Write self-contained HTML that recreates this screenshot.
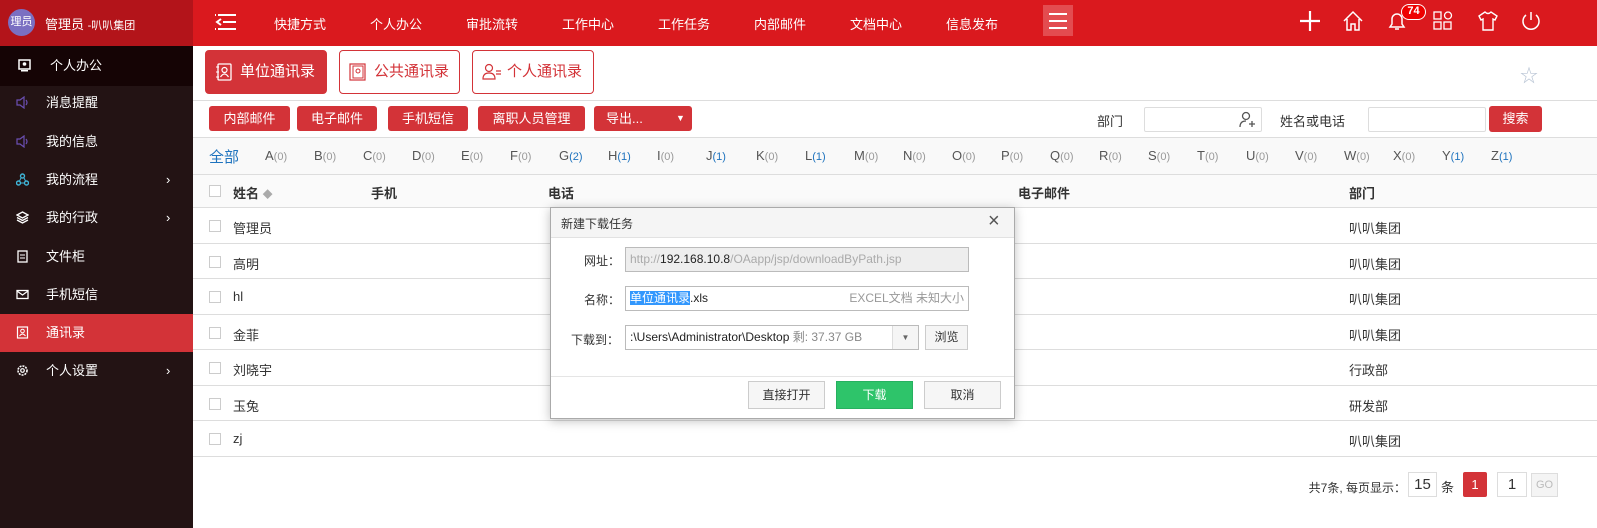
<!DOCTYPE html>
<html><head><meta charset="utf-8"><style>
*{margin:0;padding:0;box-sizing:border-box}
body{width:1597px;height:528px;overflow:hidden;background:#fff;font-family:"Liberation Sans","Noto Sans CJK SC",sans-serif;font-size:13px;color:#333;position:relative}
.a{position:absolute;white-space:nowrap}
#side{left:0;top:0;width:193px;height:528px;background:#231314}
#sh{left:0;top:0;width:193px;height:46px;background:#b3141a;color:#fff}
.mi{position:absolute;left:0;width:193px;height:38px;color:#fff;font-size:13px;line-height:38px;padding-left:46px}
.mi .ic{position:absolute;left:16px;top:12px;width:13px;height:13px}
.mi .ar{position:absolute;left:166px;top:0;font-size:13px}
#top{left:193px;top:0;width:1404px;height:46px;background:#da191e;color:#fff}
.nv{position:absolute;top:14px;font-size:13px;color:#fff}
.tab{position:absolute;top:50px;height:44px;border:1px solid #d33338;border-radius:4px;color:#d33338;font-size:15px;line-height:42px;padding-left:34px}
.btn{position:absolute;top:106px;height:25px;background:#d33338;color:#fff;border-radius:3px;font-size:13px;line-height:25px;text-align:center}
.lt{position:absolute;top:148px;font-size:13px;color:#555}
.lt i{font-style:normal;font-size:11px;color:#999}
.lt i.b{color:#1e73be}
.row{position:absolute;left:193px;width:1404px;height:35px;border-bottom:1px solid #ddd}
.cb{position:absolute;left:16px;top:12px;width:12px;height:12px;border:1px solid #ccc;background:#fff}
.row span{position:absolute;top:10px;font-size:13px;color:#333}
.th span{font-weight:bold}
</style></head><body>
<div id="side" class="a"></div>
<div id="sh" class="a">
 <div class="a" style="left:8px;top:9px;width:27px;height:27px;border-radius:50%;background:#7a6fc2;font-size:11px;line-height:27px;text-align:center;color:#fff">理员</div>
 <div class="a" style="left:45px;top:14px;font-size:13px">管理员 <span style="font-size:11px">-叭叭集团</span></div>
</div>
<div class="mi" style="top:46px;height:40px;line-height:40px;background:#150405;padding-left:50px">个人办公<svg class="ic" style="left:18px;top:13px" viewBox="0 0 13 13"><rect x="1" y="1" width="11" height="9" fill="none" stroke="#fff" stroke-width="1.5"/><circle cx="6.5" cy="5" r="1.8" fill="#fff"/><rect x="3" y="11" width="7" height="1.5" fill="#fff"/></svg></div>
<div class="mi" style="top:84px">消息提醒<svg class="ic" viewBox="0 0 13 13"><path d="M1 4h3l4-3v11l-4-3H1z M10 4q2 2.5 0 5" fill="none" stroke="#6b4fb3" stroke-width="1.2"/></svg></div>
<div class="mi" style="top:123px">我的信息<svg class="ic" viewBox="0 0 13 13"><path d="M1 4h3l4-3v11l-4-3H1z M10 4q2 2.5 0 5" fill="none" stroke="#6b4fb3" stroke-width="1.2"/></svg></div>
<div class="mi" style="top:161px">我的流程<span class="ar">&#8250;</span><svg class="ic" viewBox="0 0 13 13"><circle cx="6.5" cy="3" r="2" fill="none" stroke="#3fb5d8" stroke-width="1.4"/><circle cx="2.5" cy="10" r="2" fill="none" stroke="#3fb5d8" stroke-width="1.4"/><circle cx="10.5" cy="10" r="2" fill="none" stroke="#3fb5d8" stroke-width="1.4"/><path d="M5 5 3.5 8M8 5l1.5 3M4.5 10h4" stroke="#3fb5d8"/></svg></div>
<div class="mi" style="top:199px">我的行政<span class="ar">&#8250;</span><svg class="ic" viewBox="0 0 13 13"><path d="M6.5 1 12 4 6.5 7 1 4z M1 6.5l5.5 3 5.5-3 M1 9l5.5 3 5.5-3" fill="none" stroke="#fff" stroke-width="1.3"/></svg></div>
<div class="mi" style="top:238px">文件柜<svg class="ic" viewBox="0 0 13 13"><rect x="2" y="1" width="9" height="11" fill="none" stroke="#fff" stroke-width="1.3"/><path d="M4 5h5M4 8h5" stroke="#fff"/></svg></div>
<div class="mi" style="top:276px">手机短信<svg class="ic" viewBox="0 0 13 13"><rect x="1" y="2.5" width="11" height="8" fill="none" stroke="#fff" stroke-width="1.3"/><path d="M1 3l5.5 4 5.5-4" fill="none" stroke="#fff" stroke-width="1.2"/></svg></div>
<div class="mi" style="top:314px;background:#d33338">通讯录<svg class="ic" viewBox="0 0 13 13"><rect x="1.5" y="1" width="10" height="11" fill="none" stroke="#fff" stroke-width="1.2"/><circle cx="6.5" cy="5" r="1.8" fill="none" stroke="#fff"/><path d="M3.5 10q3-4 6 0" fill="none" stroke="#fff"/></svg></div>
<div class="mi" style="top:352px">个人设置<span class="ar">&#8250;</span><svg class="ic" viewBox="0 0 13 13"><circle cx="6.5" cy="6.5" r="4.5" fill="none" stroke="#fff" stroke-width="1.6" stroke-dasharray="2 1"/><circle cx="6.5" cy="6.5" r="1.8" fill="none" stroke="#fff" stroke-width="1.2"/></svg></div>

<div id="top" class="a">
 <svg class="a" style="left:21px;top:13px" width="24" height="18" viewBox="0 0 24 18"><path d="M4 2h18M9 9h13M4 16h18M1 2h1M1 16h1M7 6 3 9l4 3" stroke="#fff" stroke-width="2" fill="none"/></svg>
 <div class="nv" style="left:81px;">快捷方式</div>
 <div class="nv" style="left:177px">个人办公</div>
 <div class="nv" style="left:273px">审批流转</div>
 <div class="nv" style="left:369px">工作中心</div>
 <div class="nv" style="left:465px">工作任务</div>
 <div class="nv" style="left:561px">内部邮件</div>
 <div class="nv" style="left:657px">文档中心</div>
 <div class="nv" style="left:753px">信息发布</div>
 <div class="a" style="left:850px;top:5px;width:30px;height:31px;background:#e34c50"><svg width="30" height="31"><path d="M6 9h18M6 16h18M6 23h18" stroke="#fff" stroke-width="2"/></svg></div>
 <svg class="a" style="left:1106px;top:10px" width="22" height="22"><path d="M11 1v20M1 11h20" stroke="#fff" stroke-width="2.2"/></svg>
 <svg class="a" style="left:1149px;top:10px" width="22" height="22" viewBox="0 0 22 22"><path d="M2 11 11 2l9 9M5 9v11h4v-6h4v6h4V9" fill="none" stroke="#fff" stroke-width="1.5"/></svg>
 <svg class="a" style="left:1193px;top:10px" width="22" height="22" viewBox="0 0 22 22"><path d="M4 17h14l-2-3V9a5 5 0 0 0-10 0v5z M9 19h4" fill="none" stroke="#fff" stroke-width="1.5"/></svg>
 <div class="a" style="left:1208px;top:4px;width:25px;height:16px;border:1.5px solid #fff;border-radius:8px;background:#e00;font-size:11px;font-weight:bold;line-height:13px;text-align:center">74</div>
 <svg class="a" style="left:1240px;top:11px" width="20" height="20" viewBox="0 0 20 20"><rect x="1" y="1" width="7" height="7" fill="none" stroke="#fff" stroke-width="1.3"/><circle cx="15" cy="4.5" r="3.5" fill="none" stroke="#fff" stroke-width="1.3"/><rect x="1" y="11" width="7" height="7" fill="none" stroke="#fff" stroke-width="1.3"/><rect x="11" y="11" width="7" height="7" fill="none" stroke="#fff" stroke-width="1.3"/></svg>
 <svg class="a" style="left:1284px;top:10px" width="22" height="22" viewBox="0 0 22 22"><path d="M8 2 2 6l2 4 2-1v11h10V9l2 1 2-4-6-4q-3 3-6 0z" fill="none" stroke="#fff" stroke-width="1.4"/></svg>
 <svg class="a" style="left:1327px;top:10px" width="22" height="22" viewBox="0 0 22 22"><path d="M11 2v8M6 5a8 8 0 1 0 10 0" fill="none" stroke="#fff" stroke-width="1.5"/></svg>
</div>

<div class="tab" style="left:205px;width:122px;background:#d33338;color:#fff">单位通讯录<svg class="a" style="left:10px;top:12px" width="16" height="18" viewBox="0 0 16 18"><rect x="2" y="1" width="13" height="16" rx="1" fill="none" stroke="#fff" stroke-width="1.3"/><circle cx="8.5" cy="7" r="2.5" fill="none" stroke="#fff" stroke-width="1.2"/><path d="M4.5 14q4-6 8 0" fill="none" stroke="#fff" stroke-width="1.2"/><path d="M0 4h3M0 9h3M0 14h3" stroke="#fff"/></svg></div>
<div class="tab" style="left:339px;width:121px">公共通讯录<svg class="a" style="left:9px;top:12px" width="18" height="18" viewBox="0 0 18 18"><rect x="1" y="1" width="15" height="16" fill="none" stroke="#d33338" stroke-width="1.2"/><rect x="4" y="3" width="10" height="12" fill="none" stroke="#d33338"/><circle cx="9" cy="8" r="2" fill="none" stroke="#d33338"/></svg></div>
<div class="tab" style="left:472px;width:122px">个人通讯录<svg class="a" style="left:9px;top:12px" width="20" height="18" viewBox="0 0 20 18"><circle cx="7" cy="5" r="3.5" fill="none" stroke="#d33338" stroke-width="1.2"/><path d="M1 16q0-6 6-6t6 6z M14 8h5M14 11h5" fill="none" stroke="#d33338" stroke-width="1.2"/></svg></div>
<div class="a" style="left:1520px;top:62px;color:#b8c4d4;font-size:18px">☆</div>
<div class="a" style="left:193px;top:100px;width:1404px;height:1px;background:#ddd"></div>

<div class="btn" style="left:209px;width:81px">内部邮件</div>
<div class="btn" style="left:297px;width:80px">电子邮件</div>
<div class="btn" style="left:388px;width:80px">手机短信</div>
<div class="btn" style="left:478px;width:107px">离职人员管理</div>
<div class="btn" style="left:594px;width:98px;text-align:left;padding-left:12px">导出...<span class="a" style="left:82px;top:0;font-size:9px">▼</span></div>
<div class="a" style="left:1097px;top:111px">部门</div>
<div class="a" style="left:1144px;top:107px;width:118px;height:25px;border:1px solid #ddd;border-radius:2px"><svg class="a" style="left:93px;top:3px" width="18" height="18" viewBox="0 0 18 18"><circle cx="8" cy="5" r="3.5" fill="none" stroke="#555" stroke-width="1.3"/><path d="M2 16q0-6 6-6M11 13h6M14 10v6" fill="none" stroke="#555" stroke-width="1.3"/></svg></div>
<div class="a" style="left:1280px;top:111px">姓名或电话</div>
<div class="a" style="left:1368px;top:107px;width:118px;height:25px;border:1px solid #ddd;border-radius:2px"></div>
<div class="btn" style="left:1489px;width:53px;height:26px">搜索</div>

<div class="a" style="left:193px;top:137px;width:1404px;height:38px;background:#f9f9f9;border-top:1px solid #ddd;border-bottom:1px solid #ddd"></div>
<div class="lt" style="left:209px;top:146px;font-size:15px;color:#1e73be">全部</div>
<div class="lt" style="left:265px">A<i>(0)</i></div><div class="lt" style="left:314px">B<i>(0)</i></div><div class="lt" style="left:363px">C<i>(0)</i></div><div class="lt" style="left:412px">D<i>(0)</i></div><div class="lt" style="left:461px">E<i>(0)</i></div><div class="lt" style="left:510px">F<i>(0)</i></div><div class="lt" style="left:559px">G<i class="b">(2)</i></div><div class="lt" style="left:608px">H<i class="b">(1)</i></div><div class="lt" style="left:657px">I<i>(0)</i></div><div class="lt" style="left:706px">J<i class="b">(1)</i></div><div class="lt" style="left:756px">K<i>(0)</i></div><div class="lt" style="left:805px">L<i class="b">(1)</i></div><div class="lt" style="left:854px">M<i>(0)</i></div><div class="lt" style="left:903px">N<i>(0)</i></div><div class="lt" style="left:952px">O<i>(0)</i></div><div class="lt" style="left:1001px">P<i>(0)</i></div><div class="lt" style="left:1050px">Q<i>(0)</i></div><div class="lt" style="left:1099px">R<i>(0)</i></div><div class="lt" style="left:1148px">S<i>(0)</i></div><div class="lt" style="left:1197px">T<i>(0)</i></div><div class="lt" style="left:1246px">U<i>(0)</i></div><div class="lt" style="left:1295px">V<i>(0)</i></div><div class="lt" style="left:1344px">W<i>(0)</i></div><div class="lt" style="left:1393px">X<i>(0)</i></div><div class="lt" style="left:1442px">Y<i class="b">(1)</i></div><div class="lt" style="left:1491px">Z<i class="b">(1)</i></div>

<div class="row th" style="top:175px;height:33px;background:#fafafa"><div class="cb" style="top:10px"></div><span style="left:40px;top:8px">姓名 <b style="color:#aaa;font-size:10px">◆</b></span><span style="left:178px;top:8px">手机</span><span style="left:355px;top:8px">电话</span><span style="left:825px;top:8px">电子邮件</span><span style="left:1156px;top:8px">部门</span></div>
<div class="row" style="top:208px;height:36px"><div class="cb"></div><span style="left:40px">管理员</span><span style="left:1156px">叭叭集团</span></div>
<div class="row" style="top:244px"><div class="cb"></div><span style="left:40px">高明</span><span style="left:1156px">叭叭集团</span></div>
<div class="row" style="top:279px;height:36px"><div class="cb"></div><span style="left:40px">hl</span><span style="left:1156px">叭叭集团</span></div>
<div class="row" style="top:315px"><div class="cb"></div><span style="left:40px">金菲</span><span style="left:1156px">叭叭集团</span></div>
<div class="row" style="top:350px;height:36px"><div class="cb"></div><span style="left:40px">刘晓宇</span><span style="left:1156px">行政部</span></div>
<div class="row" style="top:386px"><div class="cb"></div><span style="left:40px">玉兔</span><span style="left:1156px">研发部</span></div>
<div class="row" style="top:421px;height:36px"><div class="cb"></div><span style="left:40px">zj</span><span style="left:1156px">叭叭集团</span></div>

<div class="a" style="right:191px;top:479px;font-size:12px;text-align:right">共7条, 每页显示：</div>
<div class="a" style="left:1408px;top:472px;width:29px;height:25px;border:1px solid #ddd;font-size:15px;line-height:23px;text-align:center">15</div>
<div class="a" style="left:1441px;top:477px">条</div>
<div class="a" style="left:1463px;top:472px;width:24px;height:25px;background:#d33338;color:#fff;line-height:25px;text-align:center;border-radius:2px">1</div>
<div class="a" style="left:1497px;top:472px;width:30px;height:25px;border:1px solid #ddd;font-size:15px;line-height:23px;text-align:center">1</div>
<div class="a" style="left:1531px;top:473px;width:27px;height:24px;border:1px solid #ddd;background:#f4f4f4;color:#bbb;font-size:11px;line-height:22px;text-align:center">GO</div>

<div class="a" style="left:550px;top:207px;width:465px;height:212px;background:#fff;border:1px solid #aaa;box-shadow:0 2px 10px rgba(0,0,0,.25)">
 <div class="a" style="left:0;top:0;width:463px;height:30px;background:#f5f5f5;border-bottom:1px solid #e2e2e2"></div>
 <div class="a" style="left:10px;top:7px;font-size:12px">新建下载任务</div>
 <div class="a" style="left:437px;top:2px;font-size:20px;color:#555">×</div>
 <div class="a" style="left:33px;top:44px;font-size:12px">网址：</div>
 <div class="a" style="left:74px;top:39px;width:344px;height:25px;border:1px solid #bbb;background:#eee;font-size:12px;line-height:23px;padding-left:4px;color:#aaa">http://<span style="color:#222">192.168.10.8</span>/OAapp/jsp/downloadByPath.jsp</div>
 <div class="a" style="left:33px;top:83px;font-size:12px">名称：</div>
 <div class="a" style="left:74px;top:78px;width:344px;height:25px;border:1px solid #bbb;font-size:12px;line-height:23px;padding-left:4px;color:#222"><span style="background:#3297fd;color:#fff">单位通讯录</span>.xls<span class="a" style="right:4px;top:0;color:#999">EXCEL文档 未知大小</span></div>
 <div class="a" style="left:20px;top:123px;font-size:12px">下载到：</div>
 <div class="a" style="left:74px;top:117px;width:294px;height:25px;border:1px solid #bbb;font-size:12px;line-height:23px;padding-left:4px;color:#222">:\Users\Administrator\Desktop <span style="color:#888">剩: 37.37 GB</span><span class="a" style="left:266px;top:0;width:26px;height:23px;border-left:1px solid #ddd;background:#f5f5f5;color:#666;font-size:8px;text-align:center">▼</span></div>
 <div class="a" style="left:374px;top:117px;width:43px;height:25px;border:1px solid #ccc;background:#f5f5f5;font-size:12px;line-height:23px;text-align:center">浏览</div>
 <div class="a" style="left:0;top:168px;width:463px;height:1px;background:#e5e5e5"></div>
 <div class="a" style="left:197px;top:173px;width:77px;height:28px;border:1px solid #ccc;background:#f6f6f6;font-size:12px;line-height:26px;text-align:center">直接打开</div>
 <div class="a" style="left:285px;top:173px;width:77px;height:28px;border:1px solid #27b060;background:#2ec46a;color:#fff;font-size:12px;line-height:26px;text-align:center">下载</div>
 <div class="a" style="left:373px;top:173px;width:77px;height:28px;border:1px solid #ccc;background:#f6f6f6;font-size:12px;line-height:26px;text-align:center">取消</div>
</div>
</body></html>
